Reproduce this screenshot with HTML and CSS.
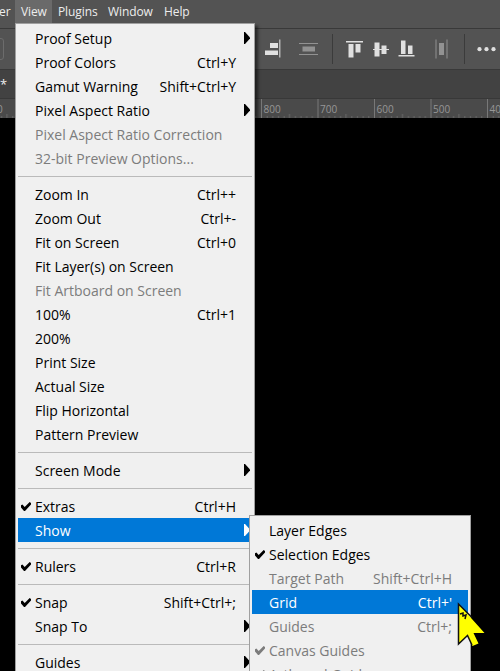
FILE: index.html
```
<!DOCTYPE html>
<html lang="en">
<head>
<meta charset="utf-8">
<title>View menu</title>
<link rel="stylesheet" href="styles.css">
</head>
<body>
<svg class="defs" width="0" height="0">
  <symbol id="arrow" viewBox="0 0 6 12"><path d="M0 0h1l5 5.5v1L1 12H0z"/></symbol>
  <symbol id="check" viewBox="0 0 10 9"><path d="M0 3.2 1.4 2.5 3.7 5 8.7 0 10 1v1.6L4 9H3L0 5.5z"/></symbol>
</svg>
<nav class="menubar"><span class="cut">er</span><span class="open">View</span><span class="plugins">Plugins</span><span class="window">Window</span><span>Help</span></nav>
<div class="options">
  <svg width="500" height="40" viewBox="0 29 500 40">
    <path d="M-4 38.5H1q2.500 0 2.500 2.500V57q0 2.500-2.500 2.500H-4" fill="none" stroke="#6c6c6c"/>
    <g fill="#e0e0e0">
      <path d="M270 43h8v5h-8zM265 50.500h13v4.500h-13z"/><path fill="#b2b2b2" d="M279 39.500h1.500v18H279z"/>
      <path d="M346 41h17v1.500h-17zM348.500 44h5v13.500h-5zM355.500 44h5v8.500h-5z"/>
      <path d="M373 49h16v1h-16zM374.500 42.500h5v14h-5zM381.500 45.500h5v8.500h-5z"/>
      <path d="M401 40.500h4.500V54H401zM408 45.500h4.500V54H408zM398.500 55h16v1.500h-16z"/>
      <circle cx="479.500" cy="49.200" r="2.100"/><circle cx="486.500" cy="49.200" r="2.100"/><circle cx="493.500" cy="49.200" r="2.100"/>
    </g>
    <g fill="#929292"><path d="M299 43h19v1h-19zM302.500 46.500h12.500v5h-12.500zM299 54h19v1h-19zM435.500 39.500h1v19h-1zM439 43h5v12h-5zM446.500 39.500h1v19h-1z"/></g>
    <path fill="#3b3b3b" d="M332 34h1v30h-1zM464 34h1v30h-1z"/>
  </svg>
</div>
<div class="tabs">*</div>
<div class="ruler">
  <svg width="500" height="19" viewBox="0 99 500 19">
    <defs><pattern id="ticks" x="261" y="99" width="56.500" height="19" patternUnits="userSpaceOnUse">
      <path stroke="#787878" d="M.5 0v19"/><path stroke="#686868" d="M28.500 15v4M6.200 17v2M11.800 17v2M17.500 17v2M23.100 17v2M34.400 17v2M40 17v2M45.700 17v2M51.300 17v2"/>
    </pattern></defs>
    <rect y="99" width="500" height="19" fill="url(#ticks)"/>
    <g class="nums"><text x="-3" y="113">0</text><text x="263.500" y="113">800</text><text x="320" y="113">700</text><text x="376.500" y="113">600</text><text x="433" y="113">500</text><text x="489.500" y="113">400</text></g>
  </svg>
</div>
<ul class="menu main">
  <li><b>Proof Setup</b><svg class="arrow"><use href="#arrow"/></svg></li>
  <li><b>Proof Colors</b><kbd>Ctrl+Y</kbd></li>
  <li><b>Gamut Warning</b><kbd>Shift+Ctrl+Y</kbd></li>
  <li><b>Pixel Aspect Ratio</b><svg class="arrow"><use href="#arrow"/></svg></li>
  <li class="off"><b>Pixel Aspect Ratio Correction</b></li>
  <li class="off"><b>32-bit Preview Options...</b></li>
  <li class="sep"></li>
  <li><b>Zoom In</b><kbd>Ctrl++</kbd></li>
  <li><b>Zoom Out</b><kbd>Ctrl+-</kbd></li>
  <li><b>Fit on Screen</b><kbd>Ctrl+0</kbd></li>
  <li><b>Fit Layer(s) on Screen</b></li>
  <li class="off"><b>Fit Artboard on Screen</b></li>
  <li><b>100%</b><kbd>Ctrl+1</kbd></li>
  <li><b>200%</b></li>
  <li><b>Print Size</b></li>
  <li><b>Actual Size</b></li>
  <li><b>Flip Horizontal</b></li>
  <li><b>Pattern Preview</b></li>
  <li class="sep"></li>
  <li><b>Screen Mode</b><svg class="arrow"><use href="#arrow"/></svg></li>
  <li class="sep"></li>
  <li><svg class="check"><use href="#check"/></svg><b>Extras</b><kbd>Ctrl+H</kbd></li>
  <li class="on"><b>Show</b><svg class="arrow"><use href="#arrow"/></svg></li>
  <li class="sep"></li>
  <li><svg class="check"><use href="#check"/></svg><b>Rulers</b><kbd>Ctrl+R</kbd></li>
  <li class="sep"></li>
  <li><svg class="check"><use href="#check"/></svg><b>Snap</b><kbd>Shift+Ctrl+;</kbd></li>
  <li><b>Snap To</b><svg class="arrow"><use href="#arrow"/></svg></li>
  <li class="sep"></li>
  <li><b>Guides</b><svg class="arrow"><use href="#arrow"/></svg></li>
</ul>
<ul class="menu sub">
  <li><b>Layer Edges</b></li>
  <li><svg class="check"><use href="#check"/></svg><b>Selection Edges</b></li>
  <li class="off"><b>Target Path</b><kbd>Shift+Ctrl+H</kbd></li>
  <li class="on"><b>Grid</b><kbd>Ctrl+'</kbd></li>
  <li class="off"><b>Guides</b><kbd>Ctrl+;</kbd></li>
  <li class="off"><svg class="check"><use href="#check"/></svg><b>Canvas Guides</b></li>
  <li class="off"><svg class="check"><use href="#check"/></svg><b>Artboard Guides</b></li>
</ul>
<svg class="cursor" width="30" height="46" viewBox="0 0 30 46">
  <path d="M1.500 2V42L10.500 33.500 15.500 44 21.500 41.500 16.500 31H27.500z" fill="#ff0"/>
  <path d="M15 15.500 1.500 2V42L10.500 33.500 15 43M3 12l3-1v3l3-1-1 4" fill="none" stroke="#111" stroke-width="1.500"/>
</svg>
</body>
</html>
```
FILE: styles.css
```
* { box-sizing: border-box; }
body {
  margin: 0;
  width: 500px;
  height: 671px;
  overflow: hidden;
  position: relative;
  background: #000;
  font-family: "Open Sans", "Noto Sans", sans-serif;
}
svg { display: block; }
.defs { position: absolute; }
.menubar {
  display: flex;
  height: 28px;
  background: #535353;
  color: #ededed;
  font-size: 12px;
  line-height: 24px;
  letter-spacing: -0.1px;
}
.menubar .cut { width: 15px; padding-left: 0; margin-left: -1px; margin-right: 1px; }
.menubar .open { width: 37px; height: 23px; padding-left: 6px; background: #6a6a6a; }
.menubar .plugins { width: 50px; margin-left: 6px; }
.menubar .window { width: 56px; }
.options { height: 42px; background: #535353; border: solid #393939; border-width: 1px 0; }
.tabs { height: 28px; background: #424242; color: #eee; font-size: 13px; line-height: 28px; }
.ruler { height: 20px; border-top: 1px solid #383838; background: #4a4a4a; }
.nums { fill: #969696; font-size: 10px; letter-spacing: 0; }
.menu {
  position: absolute;
  margin: 0;
  padding: 2px;
  list-style: none;
  background: #f0f0f0;
  border: 1px solid #a0a0a0;
  color: #000;
  font-size: 14px;
  letter-spacing: 0;
}
.main { left: 15px; top: 23px; width: 240px; height: 660px; box-shadow: 3px 3px 3px #0008; }
.sub { left: 249px; top: 515px; width: 222px; height: 170px; }
.menu li {
  display: grid;
  grid-template-columns: 17px 1fr auto 16px;
  height: 24px;
  line-height: 26px;
  white-space: nowrap;
}
.menu b { grid-column: 2; grid-row: 1; font-weight: normal; }
.menu kbd { grid-column: 3; grid-row: 1; font: inherit; }
.menu .off { color: #7c7c7c; }
.menu .on { background: #0078d7; color: #fff; }
.menu .sep { height: 12px; padding-top: 6px; }
.menu .sep::before { content: ""; grid-column: 1 / -1; height: 1px; background: #bababa; }
.arrow { grid-column: 4; grid-row: 1; width: 6px; height: 12px; margin: 6px 0 0 8px; fill: currentColor; }
.check { grid-column: 1; grid-row: 1; width: 10px; height: 9px; margin: 8px 0 0 3px; fill: currentColor; }
.cursor { position: absolute; left: 457px; top: 602px; }
```
